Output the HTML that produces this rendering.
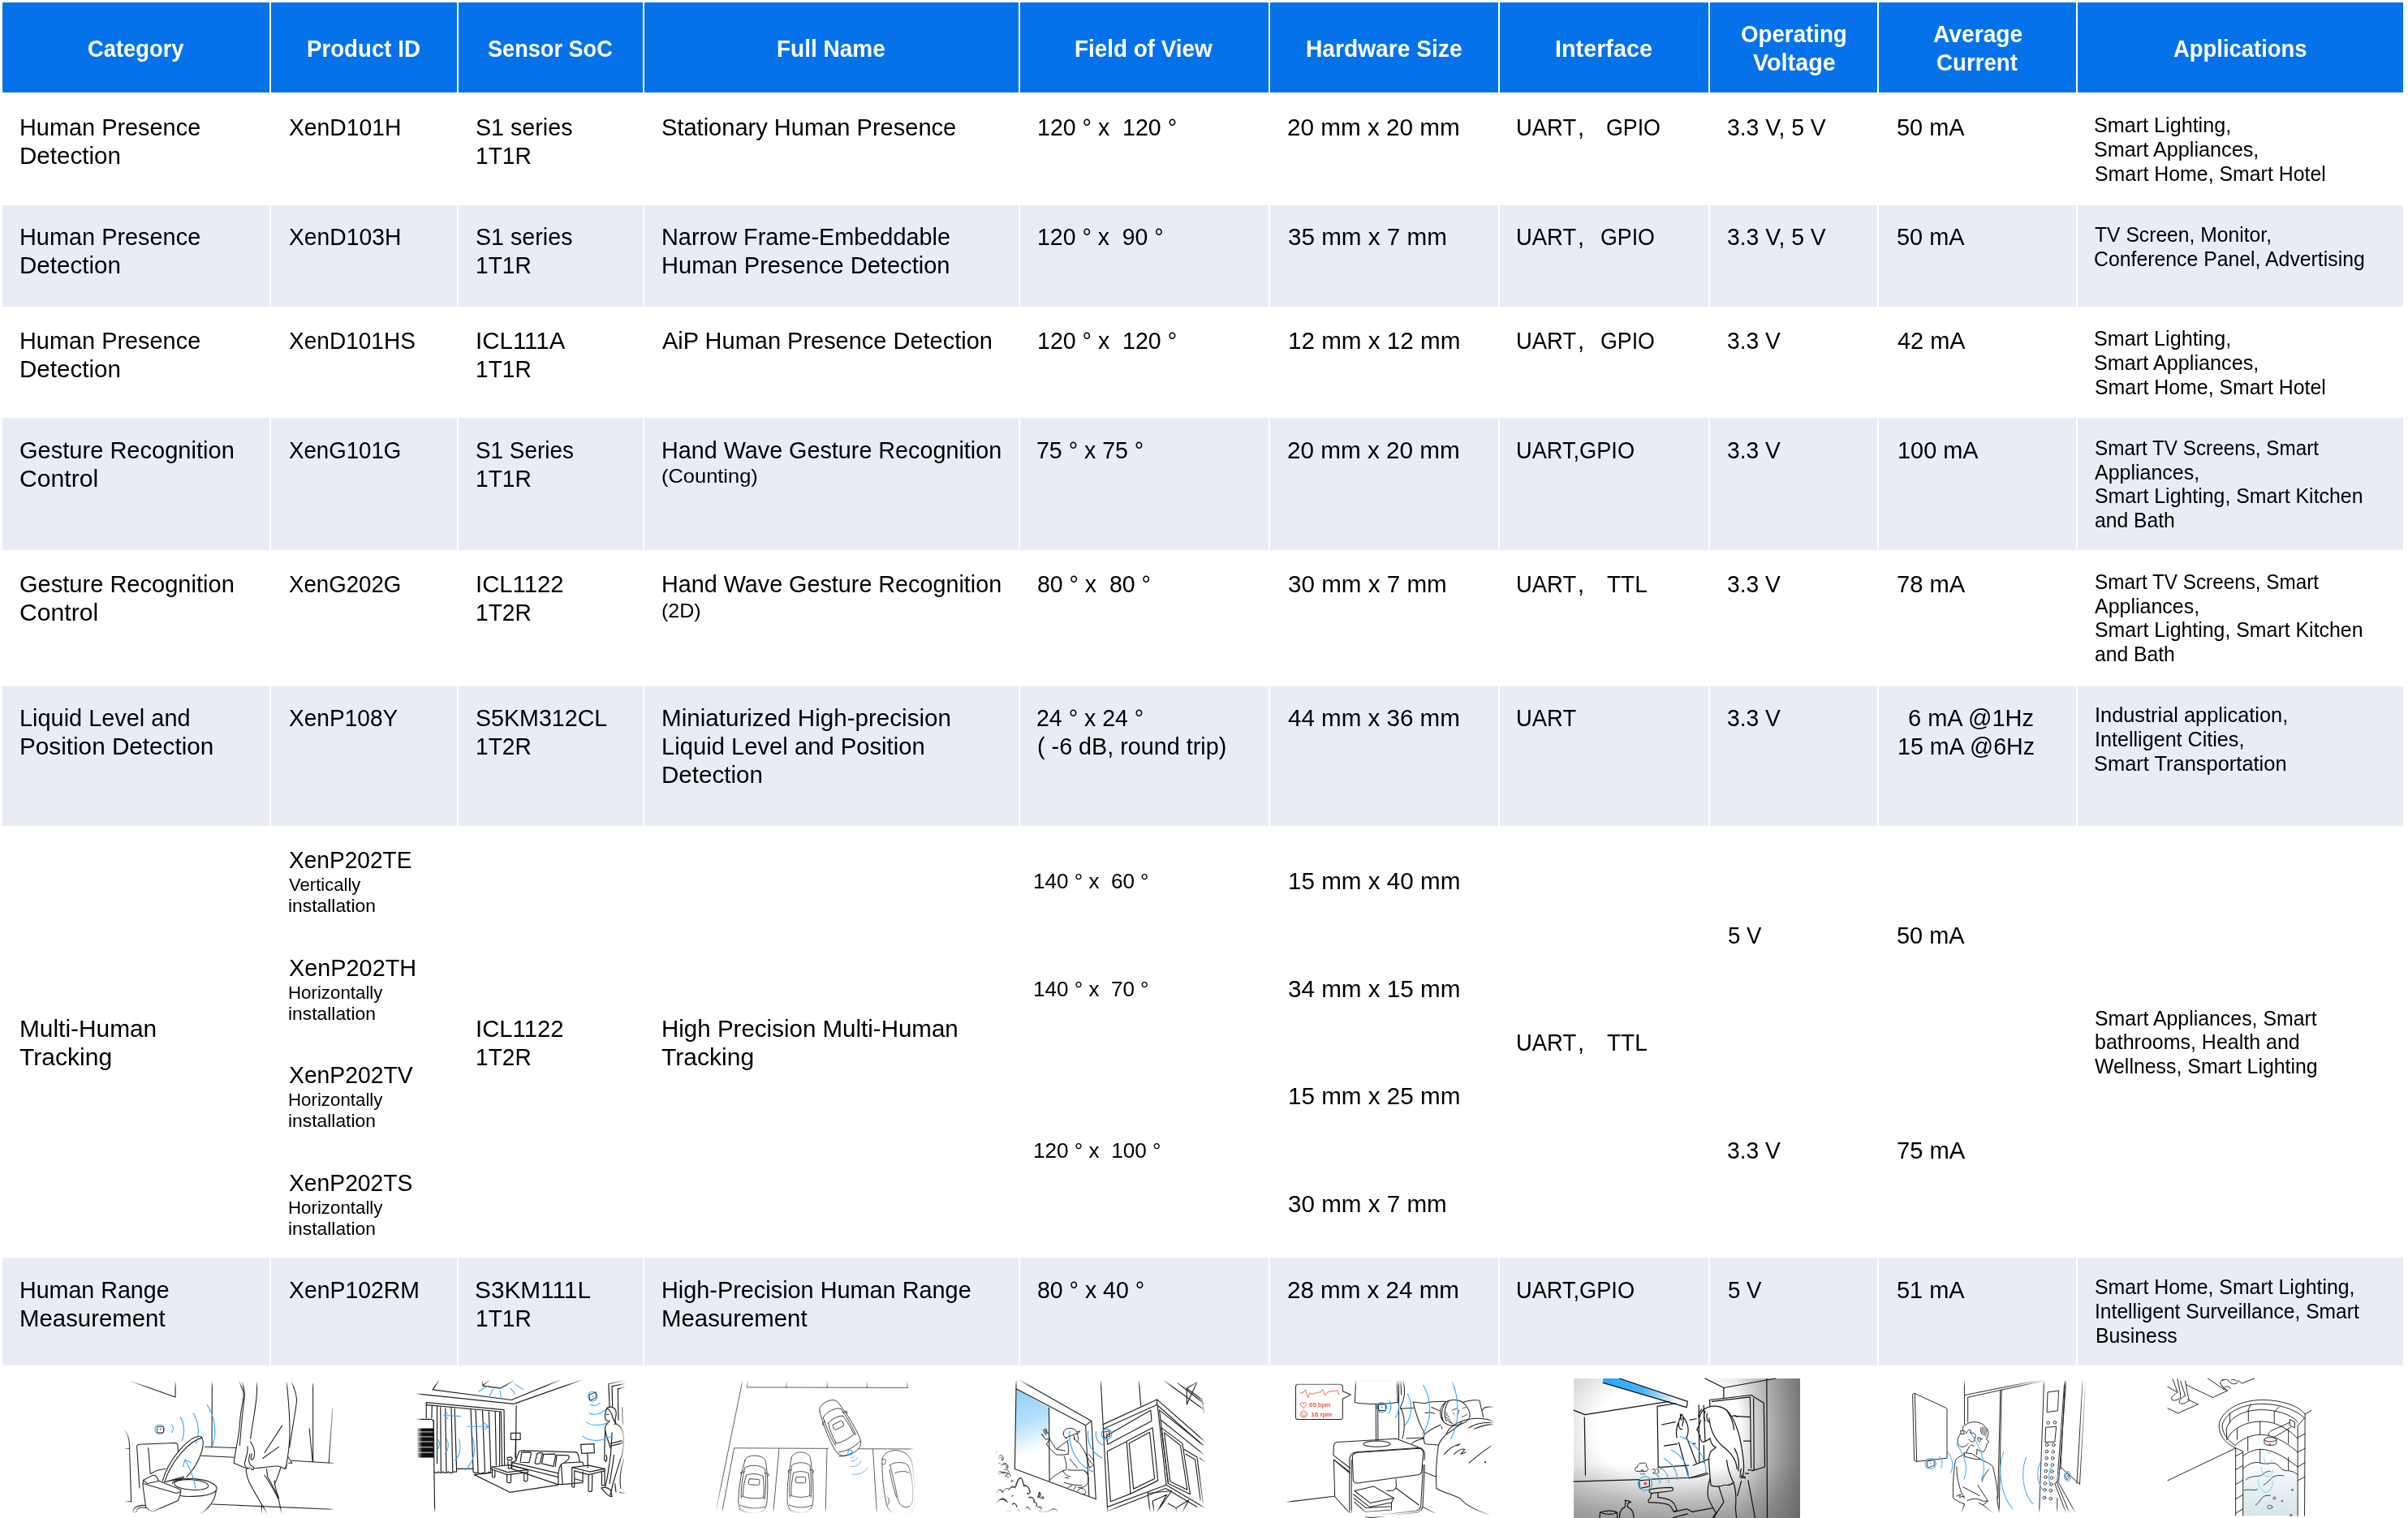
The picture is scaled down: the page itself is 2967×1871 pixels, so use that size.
<!DOCTYPE html>
<html><head><meta charset="utf-8"><title>Sensor table</title>
<style>
html,body{margin:0;padding:0;background:#fff;}
body{width:2967px;height:1871px;position:relative;overflow:hidden;font-family:"Liberation Sans",sans-serif;color:#000;}
.r{position:absolute;}
.t{position:absolute;white-space:pre;transform-origin:0 0;}
#tx{position:absolute;left:0;top:0;width:2967px;height:1871px;will-change:transform;}
svg{position:absolute;overflow:hidden;filter:blur(0.45px);}
</style></head><body>
<div class="r" style="left:3px;top:3px;width:329px;height:111px;background:#0572EA"></div>
<div class="r" style="left:334px;top:3px;width:229px;height:111px;background:#0572EA"></div>
<div class="r" style="left:565px;top:3px;width:227px;height:111px;background:#0572EA"></div>
<div class="r" style="left:794px;top:3px;width:461px;height:111px;background:#0572EA"></div>
<div class="r" style="left:1257px;top:3px;width:306.29999999999995px;height:111px;background:#0572EA"></div>
<div class="r" style="left:1565.3px;top:3px;width:280.70000000000005px;height:111px;background:#0572EA"></div>
<div class="r" style="left:1848px;top:3px;width:257px;height:111px;background:#0572EA"></div>
<div class="r" style="left:2107px;top:3px;width:206.30000000000018px;height:111px;background:#0572EA"></div>
<div class="r" style="left:2315.4px;top:3px;width:242.29999999999973px;height:111px;background:#0572EA"></div>
<div class="r" style="left:2559.8px;top:3px;width:401.6999999999998px;height:111px;background:#0572EA"></div>
<div class="r" style="left:3px;top:253.1px;width:329px;height:125.4px;background:#E9EBF5"></div>
<div class="r" style="left:334px;top:253.1px;width:229px;height:125.4px;background:#E9EBF5"></div>
<div class="r" style="left:565px;top:253.1px;width:227px;height:125.4px;background:#E9EBF5"></div>
<div class="r" style="left:794px;top:253.1px;width:461px;height:125.4px;background:#E9EBF5"></div>
<div class="r" style="left:1257px;top:253.1px;width:306.29999999999995px;height:125.4px;background:#E9EBF5"></div>
<div class="r" style="left:1565.3px;top:253.1px;width:280.70000000000005px;height:125.4px;background:#E9EBF5"></div>
<div class="r" style="left:1848px;top:253.1px;width:257px;height:125.4px;background:#E9EBF5"></div>
<div class="r" style="left:2107px;top:253.1px;width:206.30000000000018px;height:125.4px;background:#E9EBF5"></div>
<div class="r" style="left:2315.4px;top:253.1px;width:242.29999999999973px;height:125.4px;background:#E9EBF5"></div>
<div class="r" style="left:2559.8px;top:253.1px;width:401.6999999999998px;height:125.4px;background:#E9EBF5"></div>
<div class="r" style="left:3px;top:515.4px;width:329px;height:162.80000000000007px;background:#E9EBF5"></div>
<div class="r" style="left:334px;top:515.4px;width:229px;height:162.80000000000007px;background:#E9EBF5"></div>
<div class="r" style="left:565px;top:515.4px;width:227px;height:162.80000000000007px;background:#E9EBF5"></div>
<div class="r" style="left:794px;top:515.4px;width:461px;height:162.80000000000007px;background:#E9EBF5"></div>
<div class="r" style="left:1257px;top:515.4px;width:306.29999999999995px;height:162.80000000000007px;background:#E9EBF5"></div>
<div class="r" style="left:1565.3px;top:515.4px;width:280.70000000000005px;height:162.80000000000007px;background:#E9EBF5"></div>
<div class="r" style="left:1848px;top:515.4px;width:257px;height:162.80000000000007px;background:#E9EBF5"></div>
<div class="r" style="left:2107px;top:515.4px;width:206.30000000000018px;height:162.80000000000007px;background:#E9EBF5"></div>
<div class="r" style="left:2315.4px;top:515.4px;width:242.29999999999973px;height:162.80000000000007px;background:#E9EBF5"></div>
<div class="r" style="left:2559.8px;top:515.4px;width:401.6999999999998px;height:162.80000000000007px;background:#E9EBF5"></div>
<div class="r" style="left:3px;top:845.5px;width:329px;height:172.70000000000005px;background:#E9EBF5"></div>
<div class="r" style="left:334px;top:845.5px;width:229px;height:172.70000000000005px;background:#E9EBF5"></div>
<div class="r" style="left:565px;top:845.5px;width:227px;height:172.70000000000005px;background:#E9EBF5"></div>
<div class="r" style="left:794px;top:845.5px;width:461px;height:172.70000000000005px;background:#E9EBF5"></div>
<div class="r" style="left:1257px;top:845.5px;width:306.29999999999995px;height:172.70000000000005px;background:#E9EBF5"></div>
<div class="r" style="left:1565.3px;top:845.5px;width:280.70000000000005px;height:172.70000000000005px;background:#E9EBF5"></div>
<div class="r" style="left:1848px;top:845.5px;width:257px;height:172.70000000000005px;background:#E9EBF5"></div>
<div class="r" style="left:2107px;top:845.5px;width:206.30000000000018px;height:172.70000000000005px;background:#E9EBF5"></div>
<div class="r" style="left:2315.4px;top:845.5px;width:242.29999999999973px;height:172.70000000000005px;background:#E9EBF5"></div>
<div class="r" style="left:2559.8px;top:845.5px;width:401.6999999999998px;height:172.70000000000005px;background:#E9EBF5"></div>
<div class="r" style="left:3px;top:1550.4px;width:329px;height:132.89999999999986px;background:#E9EBF5"></div>
<div class="r" style="left:334px;top:1550.4px;width:229px;height:132.89999999999986px;background:#E9EBF5"></div>
<div class="r" style="left:565px;top:1550.4px;width:227px;height:132.89999999999986px;background:#E9EBF5"></div>
<div class="r" style="left:794px;top:1550.4px;width:461px;height:132.89999999999986px;background:#E9EBF5"></div>
<div class="r" style="left:1257px;top:1550.4px;width:306.29999999999995px;height:132.89999999999986px;background:#E9EBF5"></div>
<div class="r" style="left:1565.3px;top:1550.4px;width:280.70000000000005px;height:132.89999999999986px;background:#E9EBF5"></div>
<div class="r" style="left:1848px;top:1550.4px;width:257px;height:132.89999999999986px;background:#E9EBF5"></div>
<div class="r" style="left:2107px;top:1550.4px;width:206.30000000000018px;height:132.89999999999986px;background:#E9EBF5"></div>
<div class="r" style="left:2315.4px;top:1550.4px;width:242.29999999999973px;height:132.89999999999986px;background:#E9EBF5"></div>
<div class="r" style="left:2559.8px;top:1550.4px;width:401.6999999999998px;height:132.89999999999986px;background:#E9EBF5"></div>
<div id="tx">
<div class="t" style="left:107.79px;top:42.46px;font-size:30.4px;line-height:35px;font-weight:bold;color:#fff;transform:scaleX(0.8997)">Category</div>
<div class="t" style="left:378.08px;top:42.46px;font-size:30.4px;line-height:35px;font-weight:bold;color:#fff;transform:scaleX(0.9104)">Product ID</div>
<div class="t" style="left:601.42px;top:42.46px;font-size:30.4px;line-height:35px;font-weight:bold;color:#fff;transform:scaleX(0.8927)">Sensor SoC</div>
<div class="t" style="left:957.16px;top:42.46px;font-size:30.4px;line-height:35px;font-weight:bold;color:#fff;transform:scaleX(0.921)">Full Name</div>
<div class="t" style="left:1324.27px;top:42.46px;font-size:30.4px;line-height:35px;font-weight:bold;color:#fff;transform:scaleX(0.9157)">Field of View</div>
<div class="t" style="left:1608.95px;top:42.46px;font-size:30.4px;line-height:35px;font-weight:bold;color:#fff;transform:scaleX(0.9271)">Hardware Size</div>
<div class="t" style="left:1916.21px;top:42.46px;font-size:30.4px;line-height:35px;font-weight:bold;color:#fff;transform:scaleX(0.9464)">Interface</div>
<div class="t" style="left:2145.38px;top:24.36px;font-size:30.4px;line-height:35px;font-weight:bold;color:#fff;transform:scaleX(0.9111)">Operating</div>
<div class="t" style="left:2159.58px;top:58.56px;font-size:30.4px;line-height:35px;font-weight:bold;color:#fff;transform:scaleX(0.9457)">Voltage</div>
<div class="t" style="left:2381.60px;top:24.36px;font-size:30.4px;line-height:35px;font-weight:bold;color:#fff;transform:scaleX(0.9282)">Average</div>
<div class="t" style="left:2386.28px;top:58.56px;font-size:30.4px;line-height:35px;font-weight:bold;color:#fff;transform:scaleX(0.9109)">Current</div>
<div class="t" style="left:2677.92px;top:42.46px;font-size:30.4px;line-height:35px;font-weight:bold;color:#fff;transform:scaleX(0.9026)">Applications</div>
<div class="t" style="left:24.14px;top:139.26px;font-size:30.4px;line-height:35px;transform:scaleX(0.9506);">Human Presence</div>
<div class="t" style="left:24.00px;top:174.26px;font-size:30.4px;line-height:35px;transform:scaleX(0.9726);">Detection</div>
<div class="t" style="left:356.12px;top:139.26px;font-size:30.4px;line-height:35px;transform:scaleX(0.9306);">XenD101H</div>
<div class="t" style="left:585.50px;top:139.26px;font-size:30.4px;line-height:35px;transform:scaleX(0.9434);">S1 series</div>
<div class="t" style="left:586.00px;top:174.26px;font-size:30.4px;line-height:35px;transform:scaleX(0.9258);">1T1R</div>
<div class="t" style="left:814.69px;top:139.26px;font-size:30.4px;line-height:35px;transform:scaleX(0.9556);">Stationary Human Presence</div>
<div class="t" style="left:1277.99px;top:139.26px;font-size:30.4px;line-height:35px;transform:scaleX(0.9397);">120 ° x  120 °</div>
<div class="t" style="left:1586.24px;top:139.26px;font-size:30.4px;line-height:35px;transform:scaleX(0.9764);">20 mm x 20 mm</div>
<div class="t" style="left:1868.37px;top:139.26px;font-size:30.4px;line-height:35px;transform:scaleX(0.9022);">UART</div>
<div class="t" style="left:1943.50px;top:139.26px;font-size:30.4px;line-height:35px;transform:scaleX(0.95);">,</div>
<div class="t" style="left:1978.98px;top:139.26px;font-size:30.4px;line-height:35px;transform:scaleX(0.8807);">GPIO</div>
<div class="t" style="left:2127.95px;top:139.26px;font-size:30.4px;line-height:35px;transform:scaleX(0.9306);">3.3 V, 5 V</div>
<div class="t" style="left:2337.43px;top:139.26px;font-size:30.4px;line-height:35px;transform:scaleX(0.9501);">50 mA</div>
<div class="t" style="left:2580.49px;top:140.32px;font-size:25.6px;line-height:29.8px;transform:scaleX(0.9828);">Smart Lighting,</div>
<div class="t" style="left:2580.49px;top:170.12px;font-size:25.6px;line-height:29.8px;transform:scaleX(0.9856);">Smart Appliances,</div>
<div class="t" style="left:2580.51px;top:199.92px;font-size:25.6px;line-height:29.8px;transform:scaleX(0.9721);">Smart Home, Smart Hotel</div>
<div class="t" style="left:24.14px;top:274.26px;font-size:30.4px;line-height:35px;transform:scaleX(0.9506);">Human Presence</div>
<div class="t" style="left:24.00px;top:309.26px;font-size:30.4px;line-height:35px;transform:scaleX(0.9726);">Detection</div>
<div class="t" style="left:356.12px;top:274.26px;font-size:30.4px;line-height:35px;transform:scaleX(0.9306);">XenD103H</div>
<div class="t" style="left:585.50px;top:274.26px;font-size:30.4px;line-height:35px;transform:scaleX(0.9434);">S1 series</div>
<div class="t" style="left:586.00px;top:309.26px;font-size:30.4px;line-height:35px;transform:scaleX(0.9258);">1T1R</div>
<div class="t" style="left:814.74px;top:274.26px;font-size:30.4px;line-height:35px;transform:scaleX(0.9495);">Narrow Frame-Embeddable</div>
<div class="t" style="left:814.73px;top:309.26px;font-size:30.4px;line-height:35px;transform:scaleX(0.9566);">Human Presence Detection</div>
<div class="t" style="left:1277.99px;top:274.26px;font-size:30.4px;line-height:35px;transform:scaleX(0.9363);">120 ° x  90 °</div>
<div class="t" style="left:1586.60px;top:274.26px;font-size:30.4px;line-height:35px;transform:scaleX(0.975);">35 mm x 7 mm</div>
<div class="t" style="left:1868.37px;top:274.26px;font-size:30.4px;line-height:35px;transform:scaleX(0.9022);">UART</div>
<div class="t" style="left:1943.50px;top:274.26px;font-size:30.4px;line-height:35px;transform:scaleX(0.95);">,</div>
<div class="t" style="left:1971.68px;top:274.26px;font-size:30.4px;line-height:35px;transform:scaleX(0.8807);">GPIO</div>
<div class="t" style="left:2127.95px;top:274.26px;font-size:30.4px;line-height:35px;transform:scaleX(0.9306);">3.3 V, 5 V</div>
<div class="t" style="left:2337.43px;top:274.26px;font-size:30.4px;line-height:35px;transform:scaleX(0.9501);">50 mA</div>
<div class="t" style="left:2580.52px;top:274.92px;font-size:25.6px;line-height:29.8px;transform:scaleX(0.964);">TV Screen, Monitor,</div>
<div class="t" style="left:2580.39px;top:304.72px;font-size:25.6px;line-height:29.8px;transform:scaleX(0.9694);">Conference Panel, Advertising</div>
<div class="t" style="left:24.14px;top:402.26px;font-size:30.4px;line-height:35px;transform:scaleX(0.9506);">Human Presence</div>
<div class="t" style="left:24.00px;top:437.26px;font-size:30.4px;line-height:35px;transform:scaleX(0.9726);">Detection</div>
<div class="t" style="left:356.12px;top:402.26px;font-size:30.4px;line-height:35px;transform:scaleX(0.9228);">XenD101HS</div>
<div class="t" style="left:585.83px;top:402.26px;font-size:30.4px;line-height:35px;transform:scaleX(0.9703);">ICL111A</div>
<div class="t" style="left:586.00px;top:437.26px;font-size:30.4px;line-height:35px;transform:scaleX(0.9258);">1T1R</div>
<div class="t" style="left:815.50px;top:402.26px;font-size:30.4px;line-height:35px;transform:scaleX(0.9533);">AiP Human Presence Detection</div>
<div class="t" style="left:1277.99px;top:402.26px;font-size:30.4px;line-height:35px;transform:scaleX(0.9397);">120 ° x  120 °</div>
<div class="t" style="left:1586.61px;top:402.26px;font-size:30.4px;line-height:35px;transform:scaleX(0.9747);">12 mm x 12 mm</div>
<div class="t" style="left:1868.37px;top:402.26px;font-size:30.4px;line-height:35px;transform:scaleX(0.9022);">UART</div>
<div class="t" style="left:1943.50px;top:402.26px;font-size:30.4px;line-height:35px;transform:scaleX(0.95);">,</div>
<div class="t" style="left:1971.68px;top:402.26px;font-size:30.4px;line-height:35px;transform:scaleX(0.8807);">GPIO</div>
<div class="t" style="left:2128.26px;top:402.26px;font-size:30.4px;line-height:35px;transform:scaleX(0.9264);">3.3 V</div>
<div class="t" style="left:2337.51px;top:402.26px;font-size:30.4px;line-height:35px;transform:scaleX(0.9515);">42 mA</div>
<div class="t" style="left:2580.49px;top:402.92px;font-size:25.6px;line-height:29.8px;transform:scaleX(0.9828);">Smart Lighting,</div>
<div class="t" style="left:2580.49px;top:432.72px;font-size:25.6px;line-height:29.8px;transform:scaleX(0.9856);">Smart Appliances,</div>
<div class="t" style="left:2580.51px;top:462.52px;font-size:25.6px;line-height:29.8px;transform:scaleX(0.9721);">Smart Home, Smart Hotel</div>
<div class="t" style="left:23.97px;top:537.26px;font-size:30.4px;line-height:35px;transform:scaleX(0.9558);">Gesture Recognition</div>
<div class="t" style="left:23.91px;top:572.26px;font-size:30.4px;line-height:35px;transform:scaleX(0.9918);">Control</div>
<div class="t" style="left:356.13px;top:537.26px;font-size:30.4px;line-height:35px;transform:scaleX(0.91);">XenG101G</div>
<div class="t" style="left:585.54px;top:537.26px;font-size:30.4px;line-height:35px;transform:scaleX(0.9176);">S1 Series</div>
<div class="t" style="left:586.00px;top:572.26px;font-size:30.4px;line-height:35px;transform:scaleX(0.9258);">1T1R</div>
<div class="t" style="left:814.75px;top:537.26px;font-size:30.4px;line-height:35px;transform:scaleX(0.9459);">Hand Wave Gesture Recognition</div>
<div class="t" style="left:1277.49px;top:537.26px;font-size:30.4px;line-height:35px;transform:scaleX(0.9389);">75 ° x 75 °</div>
<div class="t" style="left:1586.24px;top:537.26px;font-size:30.4px;line-height:35px;transform:scaleX(0.9764);">20 mm x 20 mm</div>
<div class="t" style="left:1868.39px;top:537.26px;font-size:30.4px;line-height:35px;transform:scaleX(0.8947);">UART,GPIO</div>
<div class="t" style="left:2128.26px;top:537.26px;font-size:30.4px;line-height:35px;transform:scaleX(0.9264);">3.3 V</div>
<div class="t" style="left:2337.86px;top:537.26px;font-size:30.4px;line-height:35px;transform:scaleX(0.9504);">100 mA</div>
<div class="t" style="left:2580.53px;top:537.72px;font-size:25.6px;line-height:29.8px;transform:scaleX(0.9481);">Smart TV Screens, Smart</div>
<div class="t" style="left:2581.30px;top:567.52px;font-size:25.6px;line-height:29.8px;transform:scaleX(0.9758);">Appliances,</div>
<div class="t" style="left:2580.51px;top:597.32px;font-size:25.6px;line-height:29.8px;transform:scaleX(0.9721);">Smart Lighting, Smart Kitchen</div>
<div class="t" style="left:2581.04px;top:627.12px;font-size:25.6px;line-height:29.8px;transform:scaleX(0.964);">and Bath</div>
<div class="t" style="left:23.97px;top:702.26px;font-size:30.4px;line-height:35px;transform:scaleX(0.9558);">Gesture Recognition</div>
<div class="t" style="left:23.91px;top:737.26px;font-size:30.4px;line-height:35px;transform:scaleX(0.9918);">Control</div>
<div class="t" style="left:356.13px;top:702.26px;font-size:30.4px;line-height:35px;transform:scaleX(0.91);">XenG202G</div>
<div class="t" style="left:585.85px;top:702.26px;font-size:30.4px;line-height:35px;transform:scaleX(0.9642);">ICL1122</div>
<div class="t" style="left:586.00px;top:737.26px;font-size:30.4px;line-height:35px;transform:scaleX(0.9258);">1T2R</div>
<div class="t" style="left:814.75px;top:702.26px;font-size:30.4px;line-height:35px;transform:scaleX(0.9459);">Hand Wave Gesture Recognition</div>
<div class="t" style="left:1277.73px;top:702.26px;font-size:30.4px;line-height:35px;transform:scaleX(0.9368);">80 ° x  80 °</div>
<div class="t" style="left:1586.60px;top:702.26px;font-size:30.4px;line-height:35px;transform:scaleX(0.974);">30 mm x 7 mm</div>
<div class="t" style="left:1868.37px;top:702.26px;font-size:30.4px;line-height:35px;transform:scaleX(0.9022);">UART</div>
<div class="t" style="left:1943.50px;top:702.26px;font-size:30.4px;line-height:35px;transform:scaleX(0.95);">,</div>
<div class="t" style="left:1980.22px;top:702.26px;font-size:30.4px;line-height:35px;transform:scaleX(0.9219);">TTL</div>
<div class="t" style="left:2128.26px;top:702.26px;font-size:30.4px;line-height:35px;transform:scaleX(0.9264);">3.3 V</div>
<div class="t" style="left:2336.86px;top:702.26px;font-size:30.4px;line-height:35px;transform:scaleX(0.9588);">78 mA</div>
<div class="t" style="left:2580.53px;top:702.72px;font-size:25.6px;line-height:29.8px;transform:scaleX(0.9481);">Smart TV Screens, Smart</div>
<div class="t" style="left:2581.30px;top:732.52px;font-size:25.6px;line-height:29.8px;transform:scaleX(0.9758);">Appliances,</div>
<div class="t" style="left:2580.51px;top:762.32px;font-size:25.6px;line-height:29.8px;transform:scaleX(0.9721);">Smart Lighting, Smart Kitchen</div>
<div class="t" style="left:2581.04px;top:792.12px;font-size:25.6px;line-height:29.8px;transform:scaleX(0.964);">and Bath</div>
<div class="t" style="left:24.14px;top:867.26px;font-size:30.4px;line-height:35px;transform:scaleX(0.9512);">Liquid Level and</div>
<div class="t" style="left:24.08px;top:902.26px;font-size:30.4px;line-height:35px;transform:scaleX(0.9771);">Position Detection</div>
<div class="t" style="left:356.12px;top:867.26px;font-size:30.4px;line-height:35px;transform:scaleX(0.9243);">XenP108Y</div>
<div class="t" style="left:585.51px;top:867.26px;font-size:30.4px;line-height:35px;transform:scaleX(0.9418);">S5KM312CL</div>
<div class="t" style="left:586.00px;top:902.26px;font-size:30.4px;line-height:35px;transform:scaleX(0.9258);">1T2R</div>
<div class="t" style="left:814.69px;top:867.26px;font-size:30.4px;line-height:35px;transform:scaleX(0.974);">Miniaturized High-precision</div>
<div class="t" style="left:814.72px;top:902.26px;font-size:30.4px;line-height:35px;transform:scaleX(0.9607);">Liquid Level and Position</div>
<div class="t" style="left:815.00px;top:937.26px;font-size:30.4px;line-height:35px;transform:scaleX(0.9726);">Detection</div>
<div class="t" style="left:1277.49px;top:867.26px;font-size:30.4px;line-height:35px;transform:scaleX(0.9389);">24 ° x 24 °</div>
<div class="t" style="left:1278.13px;top:902.26px;font-size:30.4px;line-height:35px;transform:scaleX(0.9458);">( -6 dB, round trip)</div>
<div class="t" style="left:1587.09px;top:867.26px;font-size:30.4px;line-height:35px;transform:scaleX(0.9725);">44 mm x 36 mm</div>
<div class="t" style="left:1868.37px;top:867.26px;font-size:30.4px;line-height:35px;transform:scaleX(0.9022);">UART</div>
<div class="t" style="left:2128.26px;top:867.26px;font-size:30.4px;line-height:35px;transform:scaleX(0.9264);">3.3 V</div>
<div class="t" style="left:2350.57px;top:867.26px;font-size:30.4px;line-height:35px;transform:scaleX(0.9529);">6 mA @1Hz</div>
<div class="t" style="left:2337.88px;top:902.26px;font-size:30.4px;line-height:35px;transform:scaleX(0.9417);">15 mA @6Hz</div>
<div class="t" style="left:2581.27px;top:867.42px;font-size:25.6px;line-height:29.8px;transform:scaleX(0.9909);">Industrial application,</div>
<div class="t" style="left:2581.29px;top:897.22px;font-size:25.6px;line-height:29.8px;transform:scaleX(0.982);">Intelligent Cities,</div>
<div class="t" style="left:2580.48px;top:927.02px;font-size:25.6px;line-height:29.8px;transform:scaleX(0.9941);">Smart Transportation</div>
<div class="t" style="left:24.16px;top:1572.26px;font-size:30.4px;line-height:35px;transform:scaleX(0.942);">Human Range</div>
<div class="t" style="left:24.00px;top:1607.26px;font-size:30.4px;line-height:35px;transform:scaleX(0.9666);">Measurement</div>
<div class="t" style="left:356.12px;top:1572.26px;font-size:30.4px;line-height:35px;transform:scaleX(0.9342);">XenP102RM</div>
<div class="t" style="left:585.45px;top:1572.26px;font-size:30.4px;line-height:35px;transform:scaleX(0.9805);">S3KM111L</div>
<div class="t" style="left:586.00px;top:1607.26px;font-size:30.4px;line-height:35px;transform:scaleX(0.9258);">1T1R</div>
<div class="t" style="left:814.74px;top:1572.26px;font-size:30.4px;line-height:35px;transform:scaleX(0.9495);">High-Precision Human Range</div>
<div class="t" style="left:815.00px;top:1607.26px;font-size:30.4px;line-height:35px;transform:scaleX(0.9666);">Measurement</div>
<div class="t" style="left:1277.73px;top:1572.26px;font-size:30.4px;line-height:35px;transform:scaleX(0.9372);">80 ° x 40 °</div>
<div class="t" style="left:1586.24px;top:1572.26px;font-size:30.4px;line-height:35px;transform:scaleX(0.9732);">28 mm x 24 mm</div>
<div class="t" style="left:1868.39px;top:1572.26px;font-size:30.4px;line-height:35px;transform:scaleX(0.8947);">UART,GPIO</div>
<div class="t" style="left:2128.68px;top:1572.26px;font-size:30.4px;line-height:35px;transform:scaleX(0.9059);">5 V</div>
<div class="t" style="left:2337.43px;top:1572.26px;font-size:30.4px;line-height:35px;transform:scaleX(0.9524);">51 mA</div>
<div class="t" style="left:2580.51px;top:1572.42px;font-size:25.6px;line-height:29.8px;transform:scaleX(0.9713);">Smart Home, Smart Lighting,</div>
<div class="t" style="left:2581.33px;top:1602.22px;font-size:25.6px;line-height:29.8px;transform:scaleX(0.9625);">Intelligent Surveillance, Smart</div>
<div class="t" style="left:2581.56px;top:1632.02px;font-size:25.6px;line-height:29.8px;transform:scaleX(0.9701);">Business</div>
<div class="t" style="left:814.84px;top:573.38px;font-size:24px;line-height:28px;transform:scaleX(1.0597);">(Counting)</div>
<div class="t" style="left:814.86px;top:738.88px;font-size:24px;line-height:28px;transform:scaleX(1.0439);">(2D)</div>
<div class="t" style="left:24.07px;top:1249.96px;font-size:30.4px;line-height:35px;transform:scaleX(0.9823);">Multi-Human</div>
<div class="t" style="left:24.00px;top:1284.96px;font-size:30.4px;line-height:35px;transform:scaleX(0.9887);">Tracking</div>
<div class="t" style="left:356.12px;top:1041.96px;font-size:30.4px;line-height:35px;transform:scaleX(0.9242);">XenP202TE</div>
<div class="t" style="left:356.40px;top:1078.20px;font-size:22.8px;line-height:25.8px;transform:scaleX(0.9692);">Vertically</div>
<div class="t" style="left:355.20px;top:1104.00px;font-size:22.8px;line-height:25.8px;transform:scaleX(1.0017);">installation</div>
<div class="t" style="left:356.11px;top:1174.86px;font-size:30.4px;line-height:35px;transform:scaleX(0.949);">XenP202TH</div>
<div class="t" style="left:354.99px;top:1211.10px;font-size:22.8px;line-height:25.8px;transform:scaleX(0.9776);">Horizontally</div>
<div class="t" style="left:355.20px;top:1236.90px;font-size:22.8px;line-height:25.8px;transform:scaleX(1.0017);">installation</div>
<div class="t" style="left:356.12px;top:1307.16px;font-size:30.4px;line-height:35px;transform:scaleX(0.9313);">XenP202TV</div>
<div class="t" style="left:354.99px;top:1343.40px;font-size:22.8px;line-height:25.8px;transform:scaleX(0.9776);">Horizontally</div>
<div class="t" style="left:355.20px;top:1369.20px;font-size:22.8px;line-height:25.8px;transform:scaleX(1.0017);">installation</div>
<div class="t" style="left:356.12px;top:1439.96px;font-size:30.4px;line-height:35px;transform:scaleX(0.9298);">XenP202TS</div>
<div class="t" style="left:354.99px;top:1476.20px;font-size:22.8px;line-height:25.8px;transform:scaleX(0.9776);">Horizontally</div>
<div class="t" style="left:355.20px;top:1502.00px;font-size:22.8px;line-height:25.8px;transform:scaleX(1.0017);">installation</div>
<div class="t" style="left:585.85px;top:1249.96px;font-size:30.4px;line-height:35px;transform:scaleX(0.9642);">ICL1122</div>
<div class="t" style="left:586.00px;top:1284.96px;font-size:30.4px;line-height:35px;transform:scaleX(0.9258);">1T2R</div>
<div class="t" style="left:814.69px;top:1249.96px;font-size:30.4px;line-height:35px;transform:scaleX(0.9712);">High Precision Multi-Human</div>
<div class="t" style="left:815.00px;top:1284.96px;font-size:30.4px;line-height:35px;transform:scaleX(0.9887);">Tracking</div>
<div class="t" style="left:1272.92px;top:1071.39px;font-size:26px;line-height:30px;transform:scaleX(1.0023);">140 ° x  60 °</div>
<div class="t" style="left:1272.92px;top:1204.19px;font-size:26px;line-height:30px;transform:scaleX(1.0023);">140 ° x  70 °</div>
<div class="t" style="left:1272.92px;top:1403.39px;font-size:26px;line-height:30px;transform:scaleX(1.0049);">120 ° x  100 °</div>
<div class="t" style="left:1586.61px;top:1067.86px;font-size:30.4px;line-height:35px;transform:scaleX(0.9747);">15 mm x 40 mm</div>
<div class="t" style="left:1586.60px;top:1200.66px;font-size:30.4px;line-height:35px;transform:scaleX(0.9747);">34 mm x 15 mm</div>
<div class="t" style="left:1586.61px;top:1332.96px;font-size:30.4px;line-height:35px;transform:scaleX(0.9747);">15 mm x 25 mm</div>
<div class="t" style="left:1586.60px;top:1465.76px;font-size:30.4px;line-height:35px;transform:scaleX(0.974);">30 mm x 7 mm</div>
<div class="t" style="left:1868.37px;top:1266.96px;font-size:30.4px;line-height:35px;transform:scaleX(0.9022);">UART</div>
<div class="t" style="left:1943.50px;top:1266.96px;font-size:30.4px;line-height:35px;transform:scaleX(0.95);">,</div>
<div class="t" style="left:1980.22px;top:1266.96px;font-size:30.4px;line-height:35px;transform:scaleX(0.9219);">TTL</div>
<div class="t" style="left:2128.68px;top:1134.66px;font-size:30.4px;line-height:35px;transform:scaleX(0.9059);">5 V</div>
<div class="t" style="left:2128.26px;top:1399.76px;font-size:30.4px;line-height:35px;transform:scaleX(0.9264);">3.3 V</div>
<div class="t" style="left:2337.43px;top:1134.66px;font-size:30.4px;line-height:35px;transform:scaleX(0.9501);">50 mA</div>
<div class="t" style="left:2336.86px;top:1399.76px;font-size:30.4px;line-height:35px;transform:scaleX(0.9588);">75 mA</div>
<div class="t" style="left:2580.51px;top:1240.52px;font-size:25.6px;line-height:29.8px;transform:scaleX(0.972);">Smart Appliances, Smart</div>
<div class="t" style="left:2581.41px;top:1270.32px;font-size:25.6px;line-height:29.8px;transform:scaleX(0.9758);">bathrooms, Health and</div>
<div class="t" style="left:2581.00px;top:1300.12px;font-size:25.6px;line-height:29.8px;transform:scaleX(0.972);">Wellness, Smart Lighting</div>
</div>
<svg style="left:0;top:0" width="0" height="0"><defs>
<linearGradient id="fL" x1="0" y1="0" x2="1" y2="0"><stop offset="0" stop-color="#fff"/><stop offset="0.15" stop-color="#fff"/><stop offset="1" stop-color="#fff" stop-opacity="0"/></linearGradient>
<linearGradient id="fR" x1="1" y1="0" x2="0" y2="0"><stop offset="0" stop-color="#fff"/><stop offset="0.15" stop-color="#fff"/><stop offset="1" stop-color="#fff" stop-opacity="0"/></linearGradient>
<linearGradient id="fT" x1="0" y1="0" x2="0" y2="1"><stop offset="0" stop-color="#fff"/><stop offset="0.15" stop-color="#fff"/><stop offset="1" stop-color="#fff" stop-opacity="0"/></linearGradient>
<linearGradient id="fB" x1="0" y1="1" x2="0" y2="0"><stop offset="0" stop-color="#fff"/><stop offset="0.15" stop-color="#fff"/><stop offset="1" stop-color="#fff" stop-opacity="0"/></linearGradient>
</defs></svg>
<svg style="left:140px;top:1690px" width="290" height="181" viewBox="0 0 2408 1503" fill="none" stroke="#222" stroke-width="9" stroke-linecap="round" stroke-linejoin="round">
<!-- bathroom / toilet -->
<path d="M165 100L632 265L632 108"/>
<path d="M1008 108L1005 770"/>
<path d="M932 775L1250 785M897 865L1230 882"/>
<path d="M112 605C150 640 162 720 165 790M120 795L162 790L180 1335L120 1335"/>
<path d="M265 1195L238 775C236 760 245 752 262 750L625 735C645 735 655 745 656 765L660 830"/>
<path d="M355 785L375 1045"/>
<path d="M500 1125C560 900 760 690 860 668C930 650 930 760 880 880C840 970 790 1040 745 1085"/>
<path d="M522 1130C592 920 770 715 905 682"/>
<path d="M380 1050C420 1020 480 1005 530 1000"/>
<path d="M600 1150C620 1080 960 1080 1050 1180C1080 1230 1000 1270 850 1280C770 1285 710 1282 682 1275"/>
<ellipse cx="795" cy="1163" rx="175" ry="52" transform="rotate(4 795 1163)"/>
<path d="M520 1135L720 1080M545 1130L720 1095"/>
<path d="M1050 1215C1040 1330 960 1420 890 1458"/>
<path d="M300 1150L305 1115L395 1068C430 1058 452 1090 458 1122L690 1215C685 1245 650 1252 628 1245Z"/>
<path d="M305 1118L345 1150L455 1125"/>
<path d="M297 1152L330 1395L392 1440L660 1325L688 1240"/>
<path d="M322 1375C250 1365 200 1400 200 1435C205 1452 232 1446 240 1435M326 1397C270 1390 235 1405 230 1440"/>
<path d="M1010 1362L2250 1415"/>
<path d="M2040 128L2040 930M2002 588L2036 930M2240 382L2202 940M1820 915L2260 942"/>
<!-- robe -->
<path d="M1283 105C1320 190 1335 210 1330 260C1300 400 1290 500 1285 600C1270 720 1240 850 1230 940L1370 1000"/>
<path d="M1315 110C1345 200 1342 250 1332 330C1312 480 1300 640 1290 760"/>
<path d="M1465 110C1475 260 1440 420 1400 690"/>
<path d="M1770 110C1790 300 1810 500 1800 700C1795 800 1782 870 1762 1000"/>
<path d="M1820 110C1870 220 1880 280 1870 330C1850 480 1822 620 1800 780"/>
<path d="M1440 992C1550 992 1650 960 1700 975L1750 1000L1772 960"/>
<path d="M1725 555L1545 835M1690 775L1525 893"/>
<path d="M1785 880C1800 900 1815 920 1825 940L1790 940"/>
<!-- hand -->
<path d="M1400 720C1430 770 1450 810 1440 860C1436 900 1420 912 1408 905C1400 880 1410 860 1415 845"/>
<path d="M1370 770C1380 830 1350 880 1340 950C1345 985 1370 1000 1392 990"/>
<path d="M1395 850C1380 890 1380 935 1400 960C1425 975 1440 985 1430 1005C1420 1015 1405 1005 1405 990"/>
<!-- legs -->
<path d="M1355 1005C1360 1080 1370 1110 1400 1160C1450 1260 1520 1370 1570 1455"/>
<path d="M1545 1065C1600 1150 1660 1250 1690 1320C1700 1370 1710 1420 1720 1455"/>
<path d="M1565 1000L1575 1080C1620 1160 1680 1280 1690 1300"/>
<path d="M1710 985C1690 1050 1670 1110 1645 1160M1645 1120C1650 1200 1680 1270 1690 1300"/>
<path d="M1515 1375L1515 1455"/>
<!-- blue -->
<g stroke="#2FA9F3" stroke-width="9">
<circle cx="470" cy="596" r="48"/>
<path d="M595 548C612 572 612 602 595 628"/>
<path d="M683 470C725 540 730 640 697 715"/>
<path d="M815 432C870 520 885 640 840 742"/>
<path d="M957 345C1040 470 1060 640 1010 765"/>
<path d="M840 1200C820 1090 780 990 730 910M712 978L728 908L792 935"/>
</g>
<rect x="445" y="568" width="66" height="62" rx="8" stroke-width="8"/>
<circle cx="480" cy="593" r="9" fill="#F04030" stroke="none"/>
<g stroke="none"><rect x="90" y="0" width="80" height="1503" fill="url(#fL)"/><rect x="2200" y="0" width="80" height="1503" fill="url(#fR)"/><rect x="0" y="85" width="2408" height="80" fill="url(#fT)"/><rect x="0" y="1395" width="2408" height="80" fill="url(#fB)"/></g>
</svg>
<svg style="left:500px;top:1690px" width="290" height="181" viewBox="0 0 2408 1503" fill="none" stroke="#222" stroke-width="10" stroke-linecap="round" stroke-linejoin="round">
<!-- living room -->
<path d="M110 232L1105 335L1800 90"/>
<path d="M340 95L275 190L1080 295L1580 90"/>
<path d="M780 100L790 150L970 175L1100 100M787 147L850 97"/>
<path d="M1130 355L1125 900"/>
<path d="M210 480L210 320L1005 395L1010 960M215 345L975 415L985 965"/>
<path d="M268 350L265 480M320 355L320 945M355 370L360 1030M405 380L415 1030M465 375L480 1030M500 385L520 1025"/>
<path d="M290 1030C300 1045 320 1045 335 1030C345 1045 365 1045 380 1030C395 1045 420 1045 435 1030C450 1045 475 1045 490 1030L520 1030"/>
<path d="M285 505L290 1030L296 1450"/>
<path d="M665 390L690 1030M715 400L740 1035M785 405L810 1040M850 415L870 1020M915 415L925 960M960 420L960 960"/>
<path d="M690 1030C700 1045 720 1045 735 1035C750 1050 775 1050 790 1038C805 1050 830 1050 845 1035L870 1030"/>
<path d="M105 493L255 493C275 495 285 505 285 525L285 580"/>
<rect x="120" y="585" width="166" height="300" fill="#111" stroke="none"/>
<path d="M125 622L275 622M125 672L275 672M125 722L275 722M125 778L275 778M125 832L275 832" stroke="#fff" stroke-width="7"/>
<path d="M520 1000L690 1000"/>
<path d="M1075 635L1172 635L1172 700L1075 700ZM1125 700L1120 880"/>
<!-- sofa -->
<path d="M1125 915L1158 825C1165 815 1180 812 1200 812L1740 830C1755 832 1760 845 1765 860L1780 925"/>
<path d="M1185 832L1275 830C1285 832 1282 845 1280 855L1262 935L1172 932Z"/>
<path d="M1345 842C1360 835 1380 835 1400 840L1372 945C1350 955 1325 950 1320 940Z"/>
<path d="M1410 850L1525 848C1535 855 1532 870 1530 880L1510 975L1390 945Z"/>
<path d="M1545 858L1660 862C1675 870 1670 890 1665 900L1625 935M1545 858L1530 975"/>
<path d="M1090 935L1560 1045L1560 1085L1085 965ZM1090 935L1130 915"/>
<path d="M1560 1045C1575 960 1590 945 1620 940L1800 930C1815 935 1818 950 1818 962M1590 955L1605 1160L1560 1160L1560 1085M1605 1160L1810 1140L1812 1030"/>
<path d="M1085 965L1085 1000L1555 1160"/>
<!-- coffee table -->
<path d="M880 980L1060 960L1250 1010L1040 1035ZM880 980L880 1005L1040 1060L1250 1035L1250 1010"/>
<path d="M885 1005L885 1080C895 1090 905 1090 912 1082L912 1015M1035 1060L1035 1135C1050 1145 1065 1145 1075 1137L1075 1058M1210 1040L1210 1120C1222 1128 1235 1128 1245 1120L1245 1037"/>
<path d="M1045 925L1050 995L1078 995L1082 925M1040 905C1030 890 1045 875 1060 885C1075 870 1095 885 1085 905C1075 915 1050 915 1040 905"/>
<path d="M880 1040L700 1060L1065 1240L1555 1165"/>
<!-- side table -->
<path d="M1700 985L1870 965L2035 1000L1880 1030ZM1725 1020L1870 1060L2035 1020"/>
<path d="M1700 985L1700 1180C1710 1190 1720 1190 1725 1185L1725 1020M1870 1060L1868 1225C1880 1235 1895 1235 1905 1225L1908 1060M2035 1000L2035 1170L2005 1170L2005 1030M1725 1100L1812 1125"/>
<path d="M1790 750L1925 745L1930 835L1800 842ZM1860 840L1862 985"/>
<!-- door -->
<path d="M2245 95L2075 130L2085 370M2250 125L2110 155L2115 360M2170 180L2175 500M2175 182L2245 162M2215 370L2220 540"/>
<!-- person -->
<path d="M2050 395C2060 360 2120 355 2145 395C2160 430 2150 470 2140 500C2150 520 2150 535 2135 545"/>
<path d="M2050 395C2040 420 2035 450 2040 480C2045 505 2060 515 2085 510M2060 380C2090 400 2110 440 2120 480C2125 500 2140 520 2150 535M2055 445L2075 442"/>
<path d="M2085 515C2050 540 2030 570 2040 610C2055 680 2080 740 2095 790M2150 540C2200 560 2230 620 2230 700C2230 760 2225 800 2215 850"/>
<path d="M2040 610C2035 700 2030 800 2035 860C2025 890 2030 920 2050 925C2060 900 2055 870 2050 860M2110 630C2105 720 2100 800 2095 860"/>
<path d="M2095 740L2200 715M2100 765L2210 738M2190 715C2210 705 2225 715 2215 735"/>
<path d="M2095 860C2080 980 2060 1100 2040 1190M2215 850C2180 950 2150 1050 2120 1150C2110 1200 2100 1240 2090 1270M2130 860C2120 950 2100 1050 2085 1150"/>
<path d="M2000 1195C2030 1185 2070 1195 2095 1215L2110 1285C2080 1285 2030 1240 2000 1195ZM2140 1150L2150 1235M2190 1240C2210 1250 2230 1250 2245 1245M2230 900C2200 1000 2180 1100 2200 1200"/>
<!-- blue -->
<g stroke="#3AAEF5" stroke-width="9">
<path d="M745 210L840 150M850 270L892 185M965 195L975 285M1070 175L1118 230M1112 130L1198 185"/>
<path d="M560 462L390 452M430 430L390 452L432 488"/>
<path d="M628 567L845 567M800 530L848 567L795 605"/>
<path d="M330 700C350 730 345 770 322 805M420 700C445 750 435 800 402 842M543 697C570 780 555 870 497 915M683 682C720 800 700 920 612 1012"/>
<circle cx="1912" cy="258" r="48"/>
<path d="M1890 342C1920 360 1960 350 1988 325M1875 430C1930 455 1995 440 2035 400M1842 522C1920 565 2020 560 2085 515M1812 665C1880 730 2030 720 2118 655"/>
</g>
<path d="M1880 240L1945 215L1945 275L1885 298Z" stroke-width="8"/>
<circle cx="1915" cy="258" r="8" fill="#3AAEF5" stroke="none"/>
<g stroke="none"><rect x="90" y="0" width="80" height="1503" fill="url(#fL)"/><rect x="2185" y="0" width="80" height="1503" fill="url(#fR)"/><rect x="0" y="70" width="2408" height="80" fill="url(#fT)"/><rect x="0" y="1385" width="2408" height="80" fill="url(#fB)"/></g>
</svg>
<svg style="left:860px;top:1690px" width="290" height="181" viewBox="0 0 2408 1503" fill="none" stroke="#333" stroke-width="6.5" stroke-linecap="round" stroke-linejoin="round">
<!-- parking -->
<defs><g id="car">
<path d="M60 100C70 25 230 25 245 100C265 200 282 350 277 500C277 585 250 632 150 636C50 632 23 585 23 500C18 350 40 200 60 100Z"/>
<path d="M62 175C100 135 208 135 243 175M62 175C45 300 38 420 48 485M243 175C258 300 264 420 254 485"/>
<path d="M78 250C120 225 190 225 230 250M80 250C62 330 58 400 62 460M228 250C244 330 248 400 242 460"/>
<rect x="105" y="285" width="96" height="58" rx="10"/>
<path d="M52 465C110 488 192 488 252 465M44 560C110 590 200 590 262 560"/>
<path d="M62 215L28 226L34 246M243 215L280 226L274 246"/>
<path d="M30 600C60 625 110 632 150 632"/>
</g></defs>
<path d="M510 100L500 165L2145 170L2135 100M908 100L903 165M1322 100L1322 165M1725 100L1730 165"/>
<path d="M455 100L180 1450M245 1450L370 787L1330 792M1640 795L2200 797"/>
<path d="M830 795L770 1450M1320 795L1305 1450M1790 800L1830 1450"/>
<use href="#car" transform="translate(418 810) rotate(3.5) scale(1.15 1.0)"/>
<use href="#car" transform="translate(895 782) rotate(0.5) scale(1.04 1.05)"/>
<use href="#car" transform="translate(1140 352) rotate(-27) scale(1.12 1.0)"/>
<!-- right car (different view) -->
<path d="M1885 900C1900 830 1980 800 2060 815C2130 830 2180 880 2195 960C2215 1100 2220 1250 2215 1350C2210 1420 2190 1450 2150 1455"/>
<path d="M1885 900C1880 1050 1900 1250 1935 1380C1950 1420 1980 1450 2020 1455"/>
<path d="M1965 960C2010 925 2110 925 2150 965C2190 1060 2205 1200 2195 1330C2185 1385 2150 1395 2110 1390C2070 1380 2050 1340 2040 1290C2020 1180 1990 1060 1965 960Z"/>
<path d="M2015 1045C2060 1020 2120 1020 2160 1040M1960 1010C1975 1100 2000 1200 2030 1290M1890 905C1905 890 1925 900 1920 930C1915 960 1890 965 1880 945M1940 1290C1960 1300 1960 1350 1945 1365"/>
<g stroke="#49A8F0" stroke-width="6.5">
<circle cx="1557" cy="832" r="24" stroke-width="9"/>
<path d="M1565 885C1580 888 1595 880 1602 870M1570 920C1595 925 1620 910 1630 890M1565 975C1610 985 1655 955 1668 920M1580 1055C1650 1070 1715 1030 1735 985"/>
</g>
<g stroke="none"><rect x="160" y="0" width="80" height="1503" fill="url(#fL)"/><rect x="2155" y="0" width="80" height="1503" fill="url(#fR)"/><rect x="0" y="80" width="2408" height="80" fill="url(#fT)"/><rect x="0" y="1390" width="2408" height="80" fill="url(#fB)"/></g>
</svg>
<svg style="left:1210px;top:1690px" width="290" height="181" viewBox="0 0 2408 1503" fill="none" stroke="#222" stroke-width="9.5" stroke-linecap="round" stroke-linejoin="round">
<!-- window intruder -->
<defs><linearGradient id="g4" x1="0" y1="0" x2="0.15" y2="1"><stop offset="0" stop-color="#8fd0f7"/><stop offset="0.45" stop-color="#b5e0fa"/><stop offset="0.85" stop-color="#ffffff"/></linearGradient></defs>
<path d="M352 182L685 372L688 1000L340 1000Z" fill="url(#g4)" stroke="none"/>
<path d="M350 100L335 1000L1165 1310L1120 510L390 95"/>
<path d="M350 180L1060 555L1095 1280M1060 555L1120 510"/>
<path d="M685 375L690 1130"/>
<path d="M1215 100L1285 1440M1605 100L1625 355"/>
<path d="M1860 95L2280 400M2000 120L2270 330M2095 175L2200 115L2095 340ZM2100 180L2250 290M2250 290L2270 430"/>
<!-- bay box -->
<path d="M1240 545L1790 290L2280 720M1245 590L1790 345L2260 760M1790 290L1790 345"/>
<path d="M1275 660L1725 400L1735 510L1285 750Z"/>
<path d="M1280 820L1480 720L1520 1255L1315 1335Z"/>
<path d="M1485 715L1745 580L1800 1120L1520 1255M1505 740L1715 625L1765 1100L1550 1205Z"/>
<path d="M1795 350L1885 1165M1815 400L1905 1150"/>
<path d="M1285 1390L1885 1165L2280 1400M1290 1430L1880 1200L2200 1390"/>
<path d="M1815 400L2270 760M1830 500L2265 850"/>
<path d="M1835 580L2050 740L2130 1260L1905 1150ZM1865 630L2030 760L2100 1215L1925 1130Z"/>
<path d="M2065 800L2200 880L2260 1340M2085 850L2180 905L2235 1320M2230 890L2280 930"/>
<path d="M1695 1245L1720 1440M1700 1250L1940 1225L1790 1440M1745 1330L1890 1265L1790 1440M1745 1330L1760 1440M1905 1355L1985 1400L2115 1320M1985 1400L1990 1450M2115 1320L2050 1440"/>
<!-- sensor -->
<path d="M1243 625L1300 612L1308 665L1250 685Z" stroke-width="8"/>
<circle cx="1275" cy="643" r="9" fill="#F04030" stroke="none"/>
<g stroke="#2FA5F2"><circle cx="1275" cy="645" r="52" stroke-width="10"/>
<path d="M1165 620C1160 690 1190 740 1248 760M1085 612C1070 740 1130 840 1230 888M897 612C880 800 990 980 1150 1035"/></g>
<!-- burglar -->
<g stroke-width="8">
<path d="M832 640C830 600 870 580 915 585C945 590 965 605 970 625L1003 612L985 635L965 640"/>
<path d="M832 640C835 670 850 685 870 690M970 640C985 660 990 700 975 720C960 720 945 700 940 680M935 655C950 665 950 690 945 700M850 685C880 670 930 655 965 640"/>
<path d="M690 695C720 740 745 780 760 800L830 745C850 730 870 715 885 705M660 750C690 790 730 830 760 855C800 860 850 855 880 850M690 695L660 750"/>
<path d="M610 645L650 700L690 690L680 630M625 600L650 650M640 590L660 640M655 590L668 635M610 645L625 660"/>
<path d="M975 720C1010 750 1040 800 1060 850C1090 900 1120 950 1140 960L1100 990"/>
<path d="M880 850C890 800 880 760 875 720M840 870C860 920 870 980 860 1010M770 800L850 815M900 900L975 990"/>
<path d="M1065 850C1080 900 1090 960 1100 990M1090 850L1140 910"/>
<path d="M860 1010C820 1020 760 1050 700 1110M825 1015C840 1050 870 1075 905 1080M880 1010C940 1020 1000 1010 1040 1015C1090 1050 1100 1100 1080 1150C1060 1180 1020 1200 980 1190M840 1140C900 1160 960 1170 1020 1170M1050 1020L1090 1050M880 1190L920 1170M940 1210L960 1180M975 1225C1000 1190 1040 1190 1060 1230C1065 1250 1050 1265 1030 1260M850 1090L885 1095"/>
</g>
<!-- bushes -->
<g stroke-width="8"><path d="M175 870C190 850 210 860 215 885C225 900 215 915 200 910M215 950C240 935 262 950 265 975C270 990 255 1000 245 990M175 1055C200 1020 235 1030 250 1060C270 1040 290 1050 292 1075M235 1075C250 1065 265 1075 268 1090"/>
<path d="M345 1185C360 1150 365 1110 392 1095C418 1100 415 1150 432 1172M420 1175C450 1165 480 1190 490 1225C500 1250 480 1265 462 1255M150 1245C165 1210 195 1205 208 1240M275 1215C290 1185 320 1180 340 1195M300 1130L318 1122"/>
<path d="M480 1295C515 1285 540 1310 532 1340C560 1342 572 1372 552 1385M572 1295L588 1240C604 1242 598 1272 588 1295M602 1305C622 1272 645 1292 622 1310M150 1345C185 1300 225 1300 262 1342M190 1310C215 1295 240 1305 250 1325M310 1365C332 1340 352 1362 357 1392M450 1405C462 1380 482 1392 487 1422M572 1392C602 1382 622 1402 602 1418M585 1432C622 1452 682 1442 702 1422C732 1402 762 1412 772 1432"/></g>

<g stroke-width="7">
<path d="M150 1240C170 1200 200 1200 210 1240C230 1200 260 1190 280 1210C290 1180 320 1170 340 1190C350 1150 360 1100 390 1090C420 1090 420 1150 430 1170C460 1160 480 1190 485 1220C500 1240 480 1260 460 1250"/>
<path d="M160 1040C190 1010 200 1030 215 1050C230 1030 260 1030 270 1050M170 900C180 870 200 880 205 900M200 960C230 940 250 960 260 990M230 1010C250 1000 270 1010 280 1040M140 810C150 830 150 840 140 850M165 940L185 945"/>
<path d="M150 1340C180 1300 220 1300 260 1340M310 1360C330 1340 350 1360 355 1390M450 1400C460 1380 480 1390 485 1420M480 1290C520 1280 540 1310 530 1340C560 1340 570 1370 550 1380M570 1290L585 1240C600 1240 595 1270 585 1290M600 1300C620 1270 640 1290 620 1305M570 1390C600 1380 620 1400 600 1415M580 1430C620 1450 680 1440 700 1420C730 1400 760 1410 770 1430M250 1440C280 1420 300 1430 310 1450M360 1420C380 1410 390 1430 380 1450M300 1280L320 1275M300 1120L315 1125"/>
</g>
<g stroke="none"><rect x="120" y="0" width="80" height="1503" fill="url(#fL)"/><rect x="2220" y="0" width="80" height="1503" fill="url(#fR)"/><rect x="0" y="75" width="2408" height="80" fill="url(#fT)"/><rect x="0" y="1385" width="2408" height="80" fill="url(#fB)"/></g>
</svg>
<svg style="left:1570px;top:1690px" width="290" height="181" viewBox="0 0 2408 1503" fill="none" stroke="#222" stroke-width="8.5" stroke-linecap="round" stroke-linejoin="round">
<!-- bedroom -->
<path d="M245 135L675 135C692 136 700 145 700 160L700 205L785 240L700 285L700 470C700 487 692 495 675 495L245 495C228 495 220 487 220 470L220 160C220 145 228 136 245 135Z"/>
<g stroke="#F04A3A" stroke-width="7">
<path d="M268 225L300 215L320 190L345 270L365 225L395 235C420 225 450 215 475 215L495 185L520 250L545 215C580 200 620 205 650 200L660 240"/>
<path d="M297 330C285 310 260 325 270 350L300 378L330 345C338 320 310 312 297 330Z"/>
<circle cx="303" cy="440" r="33"/><path d="M290 430L292 436M315 428L317 434M288 452C298 462 312 462 320 450"/>
</g>
<text x="357" y="366" font-family="Liberation Sans, sans-serif" font-size="62" fill="#F04A3A" stroke="#F04A3A" stroke-width="2" textLength="220" lengthAdjust="spacingAndGlyphs">65 bpm</text>
<text x="375" y="466" font-family="Liberation Sans, sans-serif" font-size="62" fill="#F04A3A" stroke="#F04A3A" stroke-width="2" textLength="215" lengthAdjust="spacingAndGlyphs">16 rpm</text>
<!-- lamp -->
<path d="M835 100L825 320C950 345 1150 340 1265 318L1255 100" />
<path d="M838 97L1252 97" stroke="#bbb"/>
<path d="M1040 338L1042 715M1060 338L1062 715"/>
<ellipse cx="1050" cy="745" rx="138" ry="30"/>
<!-- curtain / headboard -->
<path d="M1275 95L1275 690M1295 95L1300 240M1320 100C1345 200 1330 300 1290 370C1340 450 1340 600 1310 690"/>
<path d="M1290 385L1430 375M1350 690L1530 680M1410 740C1440 710 1480 700 1530 690"/>
<!-- pillows -->
<path d="M1420 315C1440 400 1470 520 1540 640C1520 680 1530 720 1545 745L1680 755M1420 315L1540 330C1600 310 1700 310 1750 310M1545 430C1580 420 1620 425 1640 435M1610 370L1700 410"/>
<path d="M1930 320C1980 300 2060 290 2100 300L2140 470M2130 400C2140 370 2180 360 2250 370"/>
<!-- head -->
<path d="M1740 330C1780 290 1870 280 1930 320C1980 360 2010 420 2000 470C1980 520 1900 560 1830 555"/>
<path d="M1740 330C1690 380 1690 450 1720 500C1750 550 1800 560 1830 555M1760 310C1720 360 1700 440 1730 510M1785 305C1745 360 1730 440 1760 510"/>
<path d="M1750 440L1790 470M1755 470L1800 500M1770 500L1815 525M1790 520L1830 540M1745 410L1775 440" stroke-width="7"/>
<path d="M1820 400L1870 380M1930 380L1960 370M1890 400L1880 440M1920 470C1940 460 1960 455 1975 440M1830 430L1845 445" stroke-width="7"/>
<!-- blanket -->
<path d="M1760 640C1800 560 1900 500 2030 485C2120 480 2200 490 2250 520M1545 640C1600 600 1650 570 1700 550M1710 565L1718 590"/>
<path d="M1680 760C1700 700 1760 640 1830 600C1880 570 1900 540 1920 520M1990 580C2050 540 2150 520 2230 530M2050 590C2120 560 2200 545 2250 545"/>
<path d="M1680 760C1660 900 1650 1050 1660 1200C1720 1240 1820 1260 1900 1300C1960 1380 2080 1430 2200 1470"/>
<path d="M1740 850C1780 800 1840 760 1900 745L1870 765M1840 850C1880 810 1920 790 1950 800L1910 850L1960 830M1995 940C2060 880 2140 820 2220 765"/>
<circle cx="2160" cy="930" r="5" fill="#222"/>
<path d="M1540 1035L1650 1080M1520 1390L1640 1450"/>
<!-- nightstand -->
<path d="M610 760C612 740 625 728 645 726L1250 692L1480 780C1520 790 1540 820 1540 860L1535 910"/>
<path d="M610 760L605 860L775 990"/>
<path d="M800 870C810 845 830 835 860 832L1480 790C1510 790 1525 810 1525 840L1510 1020C1508 1045 1490 1058 1470 1060L850 1145C825 1148 810 1135 808 1110Z"/>
<path d="M770 1450L770 900C775 860 800 835 840 828L1470 785M790 1450L790 905"/>
<path d="M1525 960L1500 1380C1495 1410 1475 1425 1445 1430L930 1490M1540 960L1520 1385C1512 1425 1485 1442 1450 1448L940 1505"/>
<path d="M610 905L620 1285L770 1450M610 905L770 1030M625 920L775 1045"/>
<path d="M820 1225L1020 1180L1225 1300L985 1350ZM810 1260L975 1390L1200 1345L1225 1300M815 1300L940 1400L1200 1385L1200 1345M820 1340L930 1440L1200 1420L1200 1385"/>
<path d="M1250 1200L1480 1370M1245 1105L1250 1180C1240 1220 1200 1230 1150 1225"/>
<path d="M125 1340L615 1280"/>
<!-- sensor -->
<rect x="1068" y="340" width="72" height="62"/>
<circle cx="1100" cy="368" r="8" fill="#F04030" stroke="none"/>
<g stroke="#2FA5F2" stroke-width="9">
<circle cx="1100" cy="370" r="50" stroke-width="10"/>
<path d="M1183 310C1200 350 1200 395 1175 430M1255 290C1285 350 1280 420 1240 478M1365 235C1420 340 1410 470 1340 552M1525 145C1620 300 1610 520 1515 645M1815 95C1900 280 1900 540 1805 695"/>
</g>
<g stroke="none"><rect x="105" y="0" width="80" height="1503" fill="url(#fL)"/><rect x="2190" y="0" width="80" height="1503" fill="url(#fR)"/><rect x="0" y="75" width="2408" height="80" fill="url(#fT)"/><rect x="0" y="1410" width="2408" height="80" fill="url(#fB)"/></g>
</svg>
<svg style="left:1930px;top:1690px" width="290" height="181" viewBox="0 0 2408 1503" fill="none" stroke="#111" stroke-width="10" stroke-linecap="round" stroke-linejoin="round">
<!-- kitchen -->
<defs>
<radialGradient id="g6" gradientUnits="userSpaceOnUse" cx="1050" cy="600" r="1550" gradientTransform="translate(0 150) scale(1 0.75)"><stop offset="0" stop-color="#fff"/><stop offset="0.48" stop-color="#fff"/><stop offset="0.68" stop-color="#e2e2e2"/><stop offset="0.9" stop-color="#c6c6c6"/><stop offset="1" stop-color="#bebebe"/></radialGradient>
<linearGradient id="g6d" x1="0" y1="0" x2="0" y2="1"><stop offset="0" stop-color="#777" stop-opacity="0"/><stop offset="1" stop-color="#777" stop-opacity="0.55"/></linearGradient>
<linearGradient id="g6r" x1="0" y1="0" x2="1" y2="0"><stop offset="0" stop-color="#666" stop-opacity="0"/><stop offset="0.45" stop-color="#666" stop-opacity="0.35"/><stop offset="1" stop-color="#555" stop-opacity="0.7"/></linearGradient>
<linearGradient id="g6b" gradientUnits="userSpaceOnUse" x1="400" y1="90" x2="1230" y2="340"><stop offset="0" stop-color="#25A8F5"/><stop offset="0.45" stop-color="#45B4F6"/><stop offset="0.85" stop-color="#e8f5fd"/><stop offset="1" stop-color="#fff"/></linearGradient>
</defs>
<rect x="75" y="75" width="2316" height="1430" fill="url(#g6)" stroke="none"/>
<rect x="75" y="950" width="2316" height="555" fill="url(#g6d)" stroke="none"/>
<rect x="1750" y="75" width="641" height="1430" fill="url(#g6r)" stroke="none"/>
<path d="M375 75L545 75L1240 310L1230 370L375 120Z" fill="url(#g6b)" stroke="none"/>
<path d="M375 120L1230 370L1240 310L545 75"/>
<path d="M75 400L190 445L1050 310M185 475L195 1065"/>
<path d="M1420 75L1610 170L2140 75M1610 170L1610 280M2050 75L2055 1500" />
<path d="M75 1130L750 1110M870 1105L1270 1090C1340 1085 1400 1070 1450 1050"/>
<path d="M1120 330L930 360L940 985L1250 965M1355 345L1360 930M1405 350L1420 720M1405 760L1410 940"/>
<path d="M975 548L1115 520M1000 765L1135 745M1265 500L1330 488M1290 745L1320 740"/>
<path d="M1470 360L1465 295L1890 245L2020 325L2030 980L1900 1020M1490 310L1880 265L1890 990M1915 280L1920 1010M1720 460L1880 470M1815 715L1880 715M1860 1010L1920 1015M1700 460C1720 450 1740 455 1745 470"/>
<!-- woman -->
<path d="M1400 400C1450 350 1560 340 1640 400C1720 480 1760 600 1790 760C1810 880 1830 1000 1800 1090C1790 1100 1780 1090 1775 1070"/>
<path d="M1460 480C1470 600 1520 700 1600 770C1680 830 1740 900 1745 1000M1640 400C1690 470 1710 540 1715 600M1720 790C1760 860 1770 950 1760 1020M1400 400C1380 420 1365 450 1360 480M1420 410C1400 450 1405 480 1420 510M1440 430C1430 470 1440 500 1455 520M1385 390C1360 420 1350 450 1355 470"/>
<path d="M1375 500C1370 540 1350 570 1335 600L1355 620C1350 640 1360 655 1370 660C1365 690 1375 720 1400 725C1430 720 1450 700 1470 690"/>
<path d="M1470 690C1480 740 1500 770 1530 780L1480 820C1460 850 1455 900 1460 960C1465 1020 1470 1060 1470 1100L1480 1170C1520 1185 1580 1180 1620 1165"/>
<path d="M1455 900L1295 965M1440 1040L1260 1095M1150 730C1170 800 1210 950 1255 1095M1235 690L1330 940"/>
<path d="M1130 680C1120 620 1130 560 1150 520C1155 490 1170 470 1180 440L1195 470C1200 500 1195 530 1185 560M1165 440L1175 500M1195 470C1215 490 1235 530 1245 580C1250 620 1240 660 1225 690M1150 520C1140 560 1160 600 1185 595"/>
<path d="M1640 910C1650 1000 1680 1080 1710 1140C1690 1160 1660 1170 1630 1165"/>
<path d="M1470 1100C1450 1160 1440 1230 1450 1290C1470 1350 1500 1400 1530 1450L1500 1500M1560 1180L1610 1340M1710 1140C1730 1200 1740 1300 1730 1400L1740 1500M1610 1340C1580 1390 1540 1440 1510 1500"/>
<path d="M1790 1000C1770 1040 1780 1080 1830 1095M1830 1045L1865 1050M1800 1085L1830 1080M1790 1125L1750 1275M1860 1120L1930 1500"/>
<!-- faucet -->
<path d="M850 1215C880 1200 1000 1190 1080 1190C1095 1200 1095 1215 1080 1225L870 1250C850 1245 845 1225 850 1215ZM870 1250L860 1300C840 1310 830 1330 845 1345C900 1340 1000 1350 1050 1370C1080 1390 1090 1420 1100 1440L1130 1425C1120 1380 1100 1340 1060 1320C1020 1300 960 1295 935 1290L940 1245"/>
<path d="M1100 1440L1230 1410L1290 1440L1500 1400M1090 1500L1240 1460"/>
<path d="M545 1500C540 1450 560 1410 600 1390L605 1340L600 1320L640 1330L660 1340L630 1350L625 1390C670 1410 690 1450 690 1500M340 1500L345 1445C400 1425 480 1425 520 1445L520 1500M345 1447C400 1470 480 1470 520 1447"/>
<!-- cloud -->
<g stroke-width="7"><path d="M720 1025C695 1025 695 985 725 985C725 950 760 935 780 945C800 925 830 950 815 975C845 980 840 1025 815 1025ZM765 1010L770 1020M780 1010L785 1020M755 1045L765 1055M775 1045L785 1055M795 1045L800 1055"/>
<path d="M880 1010C890 995 915 1000 910 1020L885 1045L915 1045M925 1000C945 995 950 1015 935 1020C955 1022 955 1045 930 1045M960 995C968 990 972 1000 965 1003"/></g>
<!-- sensor -->
<path d="M745 1120L850 1110L850 1180L750 1200Z" stroke-width="9"/>
<circle cx="808" cy="1150" r="16" fill="#F04A3A" stroke="none"/>
<g stroke="#35ADF5" stroke-width="9"><circle cx="805" cy="1150" r="72" stroke-width="10"/>
<path d="M905 1040C945 1070 960 1110 955 1150M950 975C1020 1020 1050 1080 1048 1140M998 893C1090 950 1135 1030 1133 1110M1073 805C1190 870 1250 970 1250 1085M1163 668C1320 720 1430 880 1430 1040"/></g>
</svg>
<svg style="left:2300px;top:1690px" width="290" height="181" viewBox="0 0 2408 1503" fill="none" stroke="#222" stroke-width="8" stroke-linecap="round" stroke-linejoin="round">
<!-- elevator -->
<path d="M470 240C470 230 480 225 492 228L815 378C820 382 822 388 822 395L822 890L512 925L490 915ZM492 228L512 925"/>
<path d="M1000 95L1000 545M1005 245L1800 85M1035 268L1800 100M1035 268L1035 520M1380 190L1355 1450M1368 195L1343 1300M1815 95L1765 1450"/>
<path d="M2025 100L1950 1130M2040 100L1965 1125"/>
<path d="M1855 215L1965 200L1955 405L1848 420Z"/>
<path d="M1835 575L1940 568L1925 722L1830 728Z"/>
<g stroke-width="7"><circle cx="1858" cy="528" r="15"/><circle cx="1925" cy="525" r="15"/><circle cx="1845" cy="755" r="15"/><circle cx="1912" cy="755" r="15"/><circle cx="1842" cy="822" r="15"/><circle cx="1908" cy="825" r="15"/><circle cx="1840" cy="890" r="15"/><circle cx="1903" cy="892" r="15"/><circle cx="1835" cy="957" r="15"/><circle cx="1900" cy="960" r="15"/><circle cx="1832" cy="1022" r="15"/><circle cx="1897" cy="1027" r="15"/><circle cx="1830" cy="1085" r="15"/><circle cx="1892" cy="1092" r="15"/><circle cx="1826" cy="1150" r="15"/><circle cx="1888" cy="1158" r="15"/><circle cx="1822" cy="1215" r="15"/><circle cx="1883" cy="1222" r="15"/><circle cx="1818" cy="1295" r="15"/><circle cx="1882" cy="1305" r="15"/></g>
<path d="M2030 95L1985 1000M2210 100L2150 1150M2240 100L2180 1155M1985 985L2150 1130L2180 1155"/>
<path d="M1925 1150C1930 1135 1945 1130 1960 1135L2135 1450M1925 1150L2040 1450M1945 1140L2075 1450M1950 1300L1950 1450"/>
<!-- person -->
<path d="M1000 560C1030 520 1120 505 1180 540C1230 575 1255 620 1240 660L1225 700L1250 720L1230 745C1225 780 1210 810 1195 825C1170 825 1150 815 1130 800"/>
<path d="M1185 570L1175 640M1200 575L1188 650M1215 585L1203 660M1228 600L1218 665M1170 575L1165 625" stroke-width="6"/>
<path d="M1140 680C1155 670 1170 690 1165 710C1160 730 1145 725 1140 710ZM1160 690L1185 695"/>
<path d="M960 640C930 680 920 730 945 760C980 790 1020 770 1040 740M960 610C980 600 1010 610 1020 635C1030 610 1050 595 1060 600L1070 640C1090 625 1110 635 1115 660L1100 720C1080 730 1060 720 1045 700M990 560C975 590 985 620 1000 640M960 610L965 645L1000 640"/>
<path d="M1050 770L1020 830M1130 800L1125 855M1060 760C1075 750 1090 755 1095 770"/>
<path d="M1000 835L1080 845L1160 900L1130 905L1005 875ZM1000 850C960 870 925 885 910 910C890 1000 880 1150 885 1300L940 1335L1000 1360M1160 900C1220 930 1270 950 1290 975C1310 1050 1330 1150 1340 1250L1335 1310"/>
<path d="M920 980C920 1050 930 1120 950 1180C960 1230 980 1270 1000 1300M1250 1005C1210 1050 1190 1090 1180 1130M1135 1165C1170 1220 1210 1280 1240 1330M985 1185L1155 1275"/>
<path d="M920 1280L960 1260L950 1290L1000 1280M1030 1325C1080 1300 1140 1300 1190 1330L1240 1330L1190 1370L1150 1350"/>
<path d="M1000 1360L970 1450M1190 1370L1290 1450M1335 1310L1355 1450"/>
<!-- sensors -->
<path d="M2030 1060L2055 1040L2075 1080L2050 1110Z" stroke-width="7"/>
<circle cx="2055" cy="1073" r="7" fill="#F04030" stroke="none"/>
<path d="M620 925L690 905L692 965L625 990Z" stroke-width="7"/>
<circle cx="653" cy="942" r="7" fill="#35ADF5" stroke="none"/>
<g stroke="#3FB0F6" stroke-width="8.5">
<ellipse cx="2055" cy="1075" rx="32" ry="50" stroke-width="9"/>
<path d="M1975 1020C1950 1060 1950 1090 1960 1130M1895 975C1855 1040 1855 1120 1890 1180M1785 915C1730 1020 1740 1150 1815 1230M1632 880C1570 1040 1600 1250 1700 1358M1400 825C1330 1020 1380 1280 1497 1415"/>
<circle cx="653" cy="945" r="55" stroke-width="9"/>
<path d="M745 875C775 910 778 955 760 993M832 832C885 900 890 980 860 1040M917 745C1010 860 1040 1000 995 1105M1055 625C1190 800 1230 980 1175 1110"/>
</g>
<g stroke="none"><rect x="150" y="0" width="80" height="1503" fill="url(#fL)"/><rect x="2180" y="0" width="80" height="1503" fill="url(#fR)"/><rect x="0" y="75" width="2408" height="80" fill="url(#fT)"/><rect x="0" y="1390" width="2408" height="80" fill="url(#fB)"/></g>
</svg>
<svg style="left:2630px;top:1690px" width="290" height="181" viewBox="0 0 2408 1503" fill="none" stroke="#222" stroke-width="8" stroke-linecap="round" stroke-linejoin="round">
<!-- well -->
<defs><linearGradient id="g8" x1="0" y1="0" x2="0" y2="1"><stop offset="0" stop-color="#e3eef4" stop-opacity="0"/><stop offset="0.4" stop-color="#eaf2f6"/><stop offset="1" stop-color="#d6e5ec"/></linearGradient></defs>
<path d="M1112 1000C1160 950 1230 920 1290 940C1350 960 1400 930 1440 945C1480 960 1490 1000 1520 1010C1560 1030 1600 1000 1668 1060L1668 1480L1112 1480Z" fill="url(#g8)" stroke="none"/>
<path d="M390 80L440 215M440 80L470 230M470 100L520 250M520 100L545 240"/>
<path d="M440 215C410 240 370 260 380 290C400 310 440 295 470 275L470 230M520 250C480 275 450 300 460 325C480 345 530 325 560 300L545 240"/>
<path d="M340 160L430 210M530 140L800 270L950 200L890 150M340 380L445 430L650 340L545 290M750 75L920 190M1060 95L1100 125L1225 75"/>
<path d="M880 130C870 110 890 90 910 85M900 95C930 80 960 85 965 100M990 90C1020 80 1050 95 1055 115C1040 135 1000 135 985 120M925 160C950 150 980 160 985 175M880 130L925 185L950 200M960 95L985 120"/>
<path d="M1030 785C900 720 850 620 870 520C920 380 1100 300 1290 295C1480 290 1680 350 1745 440"/>
<path d="M1030 760C940 700 890 620 900 540C940 420 1100 340 1290 335C1460 332 1640 385 1740 480"/>
<path d="M1030 785L1110 820L1110 1480M1035 790L1035 1480M1745 440L1740 1480M1745 440L1810 402M1670 560L1670 1480M1740 480L1670 560"/>
<path d="M1190 340L1160 405M1480 365L1430 420M975 430L975 530"/>
<path d="M940 600C960 480 1100 400 1290 395C1450 395 1600 440 1670 520M945 700C1000 580 1150 515 1290 515C1420 515 1540 560 1670 690M1030 760C1100 690 1200 650 1290 650C1400 650 1520 700 1670 830M1110 870C1170 820 1240 800 1290 800C1400 800 1530 870 1670 980"/>
<path d="M1165 405L1165 515M1430 420L1430 530M1050 585L1050 700M1285 515L1285 650M1575 600L1575 740M1160 670L1160 820M1285 800L1285 940M1575 880L1575 1010M940 600L945 700"/>
<path d="M1035 870L1110 830M1035 1010L1110 965M1035 1160L1110 1115M1035 1310L1110 1265M1035 1455L1110 1410M1670 680L1745 640M1670 830L1745 790M1670 980L1745 935M1670 1120L1745 1080"/>
<path d="M1110 1000C1160 950 1230 920 1290 940C1350 960 1400 930 1440 945C1480 960 1490 1000 1520 1010C1560 1030 1600 1000 1670 1060"/>
<path d="M1140 1110C1200 1060 1260 1090 1310 1060C1340 1030 1370 1020 1390 1025M1320 1165C1360 1150 1380 1110 1420 1080C1460 1065 1500 1065 1525 1070M1120 1220C1170 1200 1220 1230 1260 1210M1240 1370C1290 1340 1290 1290 1340 1275L1390 1270" stroke-width="7"/>
<g stroke-width="6"><circle cx="1430" cy="1300" r="12"/><circle cx="1615" cy="1215" r="8"/><circle cx="1510" cy="1330" r="6"/><ellipse cx="1385" cy="1390" rx="25" ry="18"/><circle cx="1600" cy="1475" r="10"/></g>
<path d="M340 1120L1030 790"/>
<!-- sensor arm -->
<path d="M1590 495L1640 520L1640 580L1590 555Z"/>
<path d="M1370 665C1370 630 1385 615 1410 605L1590 525M1405 690L1600 575" />
<ellipse cx="1390" cy="700" rx="62" ry="22" fill="#fff"/>
<path d="M1328 700L1328 740C1340 765 1440 765 1452 740L1452 700"/>
<circle cx="1385" cy="752" r="10" fill="#EE1C25" stroke="none"/>
<g stroke="#5FC3EA" stroke-width="6"><path d="M1355 800C1355 860 1400 860 1408 810M1325 880C1330 980 1395 980 1405 905M1295 980C1310 1110 1400 1110 1415 1010M1262 1115C1290 1280 1400 1280 1418 1125"/></g>
</svg>

</body></html>
